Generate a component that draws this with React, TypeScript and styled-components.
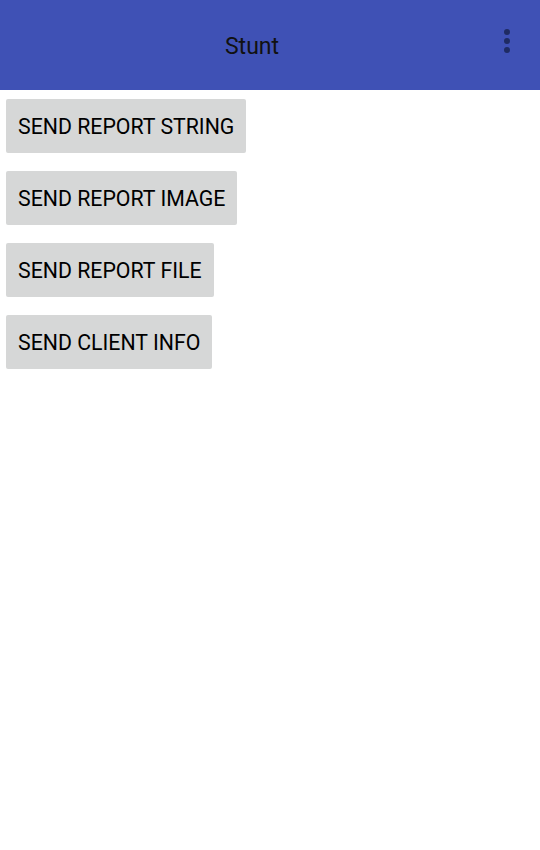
import React from "react";
import styled, { createGlobalStyle } from "styled-components";

const Global = createGlobalStyle`
  html, body { margin: 0; padding: 0; background: #ffffff; }
  body { font-family: Roboto, "Noto Sans", sans-serif; }
`;

const Screen = styled.div`
  width: 540px;
  min-height: 850px;
  background: #ffffff;
`;

const AppBar = styled.header`
  height: 90px;
  background: #3f51b5;
  display: flex;
  align-items: center;
`;

const Title = styled.h1`
  flex: 1;
  margin: 2px 0 0;
  padding-left: 16px;
  text-align: center;
  font-family: Roboto, sans-serif;
  font-weight: 400;
  font-size: 23px;
  color: #111;
`;

const MenuButton = styled.div`
  flex: 0 0 52px;
  height: 30px;
  margin-top: -8px;
  padding-right: 14px;
  box-sizing: border-box;
  display: flex;
  flex-direction: column;
  align-items: center;
  justify-content: center;
  gap: 3px;
`;

const Dot = styled.span`
  width: 6px;
  height: 6px;
  border-radius: 50%;
  background: #1f2b63;
`;

const List = styled.main`
  display: flex;
  flex-direction: column;
  align-items: flex-start;
  gap: 18px;
  padding: 9px 6px;
`;

const ActionButton = styled.button`
  height: 54px;
  padding: 1px 12px 0;
  border: none;
  border-radius: 2px;
  background: #d6d7d7;
  color: #000;
  font-family: Roboto, sans-serif;
  font-weight: 400;
  font-size: 21.3px;
  text-transform: uppercase;
  cursor: pointer;
`;

const actions = [
  "Send report string",
  "Send report image",
  "Send report file",
  "Send client info",
];

export default function App() {
  return (
    <Screen>
      <Global />
      <AppBar>
        <Title>Stunt</Title>
        <MenuButton>
          <Dot />
          <Dot />
          <Dot />
        </MenuButton>
      </AppBar>
      <List>
        {actions.map((a) => (
          <ActionButton key={a}>{a}</ActionButton>
        ))}
      </List>
    </Screen>
  );
}
